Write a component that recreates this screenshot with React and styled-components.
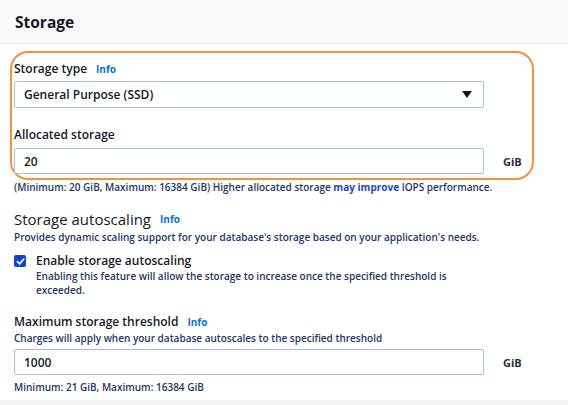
import React from "react";
import styled, { createGlobalStyle } from "styled-components";

const GlobalStyle = createGlobalStyle`
  html, body {
    margin: 0;
    padding: 0;
    background: #f4f4f7;
  }
  body {
    font-family: "Open Sans", Lato, sans-serif;
    color: #16191f;
  }
`;

const Card = styled.div`
  width: 568px;
  height: 400px;
  background: #fff;
  overflow: hidden;
`;

const Header = styled.div`
  height: 44px;
  box-sizing: border-box;
  background: #f9f9fc;
  border-bottom: 1px solid #e8e9f0;
  display: flex;
  align-items: center;
  padding-left: 15px;
  font-size: 15.5px;
  font-weight: 700;
  color: #16191f;
`;

const Body = styled.div`
  padding: 7px 0 0 14px;
`;

const Highlight = styled.div`
  margin-left: -4px;
  width: 524px;
  box-sizing: border-box;
  border: 2px solid #f39238;
  border-radius: 18px;
  padding: 8px 0 4px 2px;
`;

const Label = styled.div`
  display: flex;
  align-items: center;
  gap: 9px;
  font-size: 12px;
  line-height: 16px;
  font-weight: 600;
  color: #16191f;
  margin-top: ${(p) => p.$top || 0}px;
`;

const Heading = styled(Label)`
  font-size: 15px;
  line-height: 20px;
  font-weight: 500;
`;

const Info = styled.span`
  font-size: 10px;
  font-weight: 700;
  color: #0972d3;
`;

const Row = styled.div`
  display: flex;
  align-items: center;
  gap: 19px;
  margin-top: ${(p) => p.$top || 0}px;
`;

const Box = styled.div`
  width: 470px;
  height: ${(p) => p.$h || 26}px;
  box-sizing: border-box;
  border: 1px solid #a3c2e2;
  border-radius: 2px;
  background: #fff;
  display: flex;
  align-items: center;
  justify-content: space-between;
  padding: 0 10px 0 9px;
  font-size: 12px;
  font-weight: 600;
  color: #16191f;
`;

const Caret = styled.span`
  width: 0;
  height: 0;
  border-left: 5px solid transparent;
  border-right: 5px solid transparent;
  border-top: 7px solid #16191f;
  margin-right: 1px;
`;

const Unit = styled.span`
  font-size: 11px;
  font-weight: 700;
  color: #2a2e35;
`;

const Help = styled.div`
  font-size: 10px;
  line-height: ${(p) => p.$lh || 12}px;
  font-weight: 600;
  color: #243668;
  margin-top: ${(p) => p.$top || 0}px;
  padding-left: ${(p) => p.$indent || 0}px;
  max-width: ${(p) => p.$max || 540}px;

  b {
    color: #1d45c7;
    font-weight: 700;
  }
`;

const Check = styled.div`
  display: flex;
  align-items: center;
  gap: 10px;
  margin-top: ${(p) => p.$top || 0}px;
`;

const Tick = styled.span`
  width: 12px;
  height: 12px;
  border-radius: 2px;
  background: #0b45d8;
  display: flex;
  align-items: center;
  justify-content: center;
`;

export default function App() {
  return (
    <>
      <GlobalStyle />
      <Card>
        <Header>Storage</Header>
        <Body>
          <Highlight>
            <Label>
              Storage type <Info>Info</Info>
            </Label>
            <Row $top={4}>
              <Box $h={27}>
                General Purpose (SSD)
                <Caret />
              </Box>
            </Row>
            <Label $top={19}>Allocated storage</Label>
            <Row $top={5}>
              <Box>20</Box>
              <Unit>GiB</Unit>
            </Row>
          </Highlight>
          <Help $top={1}>
            (Minimum: 20 GiB, Maximum: 16384 GiB) Higher allocated storage{" "}
            <b>may improve</b> IOPS performance.
          </Help>

          <Heading $top={16}>
            Storage autoscaling <Info>Info</Info>
          </Heading>
          <Help $top={2}>
            Provides dynamic scaling support for your database's storage based
            on your application's needs.
          </Help>
          <Check $top={10}>
            <Tick>
              <svg width="9" height="9" viewBox="0 0 10 10">
                <path
                  d="M1.5 5.2 L4 7.6 L8.6 2.4"
                  fill="none"
                  stroke="#fff"
                  strokeWidth="1.8"
                  strokeLinecap="round"
                  strokeLinejoin="round"
                />
              </svg>
            </Tick>
            <Label>Enable storage autoscaling</Label>
          </Check>
          <Help $lh={14} $indent={22} $max={452}>
            Enabling this feature will allow the storage to increase once the
            specified threshold is exceeded.
          </Help>

          <Label $top={17}>
            Maximum storage threshold <Info>Info</Info>
          </Label>
          <Help $top={2}>
            Charges will apply when your database autoscales to the specified
            threshold
          </Help>
          <Row $top={5}>
            <Box>1000</Box>
            <Unit>GiB</Unit>
          </Row>
          <Help $top={6}>Minimum: 21 GiB, Maximum: 16384 GiB</Help>
        </Body>
      </Card>
    </>
  );
}
